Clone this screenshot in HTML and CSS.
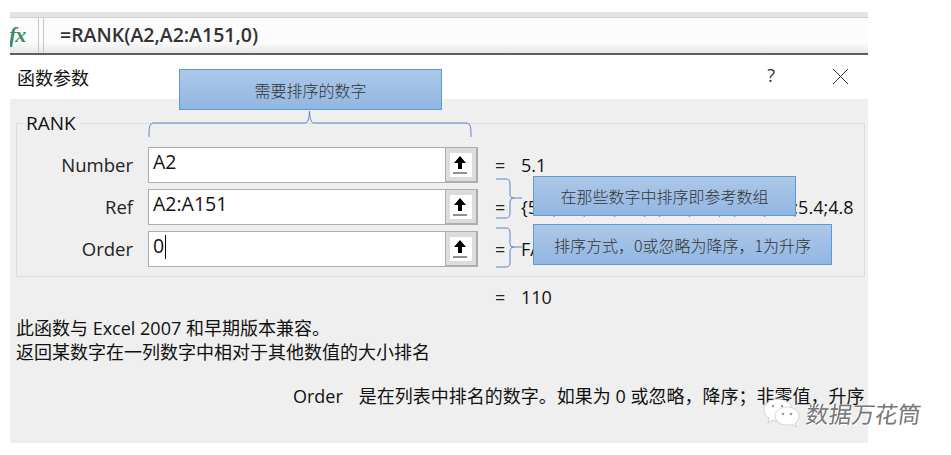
FILE: index.html
```html
<!DOCTYPE html>
<html lang="zh-CN">
<head>
<meta charset="utf-8">
<title>函数参数</title>
<link rel="stylesheet" href="styles.css">
</head>
<body>
<div class="app">
  <div class="topstrip"></div>
  <div class="formula-bar">
    <div class="fx-cell"><span class="fx">fx</span></div>
    <div class="formula">=RANK(A2,A2:A151,0)</div>
  </div>
  <div class="titlebar">
    <span class="title">函数参数</span>
    <span class="help">?</span>
    <svg class="close" width="17" height="17" viewBox="0 0 17 17"><path d="M1 1L16 16M16 1L1 16" stroke="#333" stroke-width="1" fill="none"/></svg>
  </div>
  <div class="panel">
    <fieldset class="group">
      <legend class="legend">RANK</legend>
      <div class="row">
        <span class="label">Number</span>
        <div class="input"><span class="value">A2</span>
          <span class="picker"><span class="picker-in"><svg width="16" height="20" viewBox="0 0 16 20"><path d="M8 1L14 8H10V14H6V8H2Z" fill="#000"/><rect x="1" y="17.5" width="14" height="1" fill="#222"/></svg></span></span>
        </div>
        <span class="eq">=</span><span class="result">5.1</span>
      </div>
      <div class="row">
        <span class="label">Ref</span>
        <div class="input"><span class="value">A2:A151</span>
          <span class="picker"><span class="picker-in"><svg width="16" height="20" viewBox="0 0 16 20"><path d="M8 1L14 8H10V14H6V8H2Z" fill="#000"/><rect x="1" y="17.5" width="14" height="1" fill="#222"/></svg></span></span>
        </div>
        <span class="eq">=</span><span class="result">{5.1;4.9;4.7;4.6;5;5.4;4.6;5;4.4;4.9;5.4;4.8</span>
      </div>
      <div class="row">
        <span class="label">Order</span>
        <div class="input"><span class="value caret">0</span>
          <span class="picker"><span class="picker-in"><svg width="16" height="20" viewBox="0 0 16 20"><path d="M8 1L14 8H10V14H6V8H2Z" fill="#000"/><rect x="1" y="17.5" width="14" height="1" fill="#222"/></svg></span></span>
        </div>
        <span class="eq">=</span><span class="result">FALSE</span>
      </div>
    </fieldset>
    <div class="total"><span class="eq">=</span><span class="result">110</span></div>
    <p class="desc">此函数与 Excel 2007 和早期版本兼容。<br>返回某数字在一列数字中相对于其他数值的大小排名</p>
    <p class="arg"><span class="arg-name">Order</span>是在列表中排名的数字。如果为 0 或忽略，降序；非零值，升序</p>
  </div>

  <div class="callout c1">需要排序的数字</div>
  <div class="callout c2">在那些数字中排序即参考数组</div>
  <div class="callout c3">排序方式，0或忽略为降序，1为升序</div>

  <svg class="brace b1" width="324" height="28" viewBox="0 0 324 28"><path d="M1 27C1 18 1 13 6 13H157C160 13 161 9 161.500 1C162 9 163 13 166 13H318C323 13 323 18 323 27" fill="none" stroke="#5b86c4" stroke-width="1"/></svg>
  <svg class="brace b2" width="26" height="42" viewBox="0 0 26 42"><path d="M0 1H10C14 1 14 4 14 8V16C14 19 15 20 18 20H26M18 20C15 20 14 22 14 25V34C14 39 13 40 9 40H0" fill="none" stroke="#5b86c4" stroke-width="1"/></svg>
  <svg class="brace b3" width="26" height="42" viewBox="0 0 26 42"><path d="M0 1H10C14 1 14 4 14 8V16C14 19 15 20 18 20H26M18 20C15 20 14 22 14 25V34C14 39 13 40 9 40H0" fill="none" stroke="#5b86c4" stroke-width="1"/></svg>

  <div class="watermark">
    <svg width="38" height="30" viewBox="0 0 38 30"><path d="M15 1C7 1 1 6 1 12C1 16 3 18 6 20L5 25L10 22C12 23 14 23 16 23C24 23 29 18 29 12C29 6 23 1 15 1Z" fill="#fff" stroke="#bbb" stroke-width=".6"/><path d="M24 9C17 9 12 13 12 18C12 23 17 27 24 27C26 27 27 27 29 26L33 29L32 25C35 23 36 21 36 18C36 13 31 9 24 9Z" fill="#fff" stroke="#bbb" stroke-width=".6"/><circle cx="20" cy="16" r="1.300" fill="#999"/><circle cx="28" cy="16" r="1.300" fill="#999"/><circle cx="10" cy="8" r="1.200" fill="#999"/><circle cx="19" cy="8" r="1.200" fill="#999"/></svg>
    <span class="wm-text">数据万花筒</span>
  </div>
</div>
</body>
</html>
```
FILE: styles.css
```css
* { box-sizing: border-box; }
html, body { margin: 0; padding: 0; background: #fff; }
body { width: 951px; height: 455px; overflow: hidden; font-family: "Open Sans", "Noto Sans CJK SC", sans-serif; color: #1a1a1a; }
.app { position: relative; width: 858px; height: 443px; margin-left: 10px; padding-top: 12px; }
.topstrip { height: 6px; background: #e4e4e4; border-bottom: 1px solid #cfcfcf; }
.formula-bar { display: flex; height: 37px; gap: 4px; border-bottom: 2px solid #5f5f5f; background: linear-gradient(#fcfcfc 0, #fcfcfc 70%, #e6e6e6 100%); }
.fx-cell { width: 29px; flex: none; border-right: 1px solid #c8c8c8; overflow: hidden; }
.fx { display: block; font: italic bold 22px/33px "Liberation Serif", serif; color: #3d8a62; margin-left: -1px; letter-spacing: -1px; }
.formula { flex: 1; border-left: 1px solid #c8c8c8; padding-left: 16px; font: 600 19.5px/33px "Open Sans", sans-serif; color: #333; }
.titlebar { display: flex; align-items: center; height: 44px; background: #fff; padding: 0 19px 0 7px; }
.title { font: 18px/1 "Noto Sans CJK SC", sans-serif; flex: 1; color: #111; margin-bottom: 1px; }
.help { font: 18px/1 "Open Sans", sans-serif; color: #333; margin-right: 57px; margin-bottom: 4px; }
.close { flex: none; margin-bottom: 1px; }
.panel { background: #efefef; height: 344px; padding: 14px 3px 0 6px; }
.group { margin: 0; padding: 14px 0 0; height: 164px; border: 1px solid #dcdcdc; display: flex; flex-direction: column; gap: 6px; }
.legend { margin-left: 6px; padding: 0 3px; font: 19px/20px "Open Sans", sans-serif; color: #111; height: 20px; }
.row { display: flex; align-items: center; height: 36px; flex: none; font-size: 18.500px; white-space: nowrap; }
.label { width: 116px; padding-bottom: 2px; text-align: right; color: #222; }
.input { display: flex; width: 330px; height: 36px; margin-left: 15px; background: #fff; border: 1px solid #adadad; border-right: 0; }
.value { flex: 1; padding-left: 4px; font-size: 19.500px; line-height: 28px; color: #111; }
.caret::after { content: ""; display: inline-block; width: 1px; height: 24px; background: #000; margin-left: 1px; vertical-align: -6px; }
.picker { width: 33px; flex: none; margin: -1px 0; background: #dcdcdc; border: 2px solid #adadad; border-width: 1px 2px 2px 1px; padding: 5px 4px 4px 4px; }
.picker-in { display: flex; justify-content: center; align-items: center; width: 100%; height: 100%; background: #fff; padding-right: 2px; }
.eq { width: 26px; margin-left: 17px; flex: none; font-size: 18px; color: #222; }
.result { font-size: 18px; color: #111; }
.total { display: flex; height: 24px; margin-top: 8px; padding-left: 462px; line-height: 24px; align-items: center; }
.desc { margin: 7px 0 0; font: 18px/24px "Open Sans", "Noto Sans CJK SC", sans-serif; color: #111; }
.arg { margin: 20px 0 0; padding-left: 277px; font: 18px/24px "Open Sans", "Noto Sans CJK SC", sans-serif; color: #111; white-space: nowrap; }
.arg-name { margin-right: 16px; }
.callout { position: absolute; display: flex; align-items: center; justify-content: center; height: 41px; font: 300 16px/1 "Noto Sans CJK SC", sans-serif; color: #333; background: linear-gradient(#adc8e8, #92b6e2); border: 1px solid #5b9bd5; }
.c1 { left: 169px; top: 69px; width: 263px; }
.c2 { left: 523px; top: 176px; width: 263px; height: 40px; }
.c3 { left: 523px; top: 224px; width: 299px; }
.brace { position: absolute; }
.b1 { left: 138px; top: 110px; }
.b2 { left: 486px; top: 178px; }
.b3 { left: 486px; top: 227px; }
.watermark { position: absolute; left: 753px; top: 398px; display: flex; align-items: center; gap: 5px; white-space: nowrap; }
.wm-text { font: 23px/1 "Noto Sans CJK SC", sans-serif; color: #777; text-shadow: 1px 1px 0 #fff, -1px 0 0 #fff; transform: skewX(-8deg); }
```
